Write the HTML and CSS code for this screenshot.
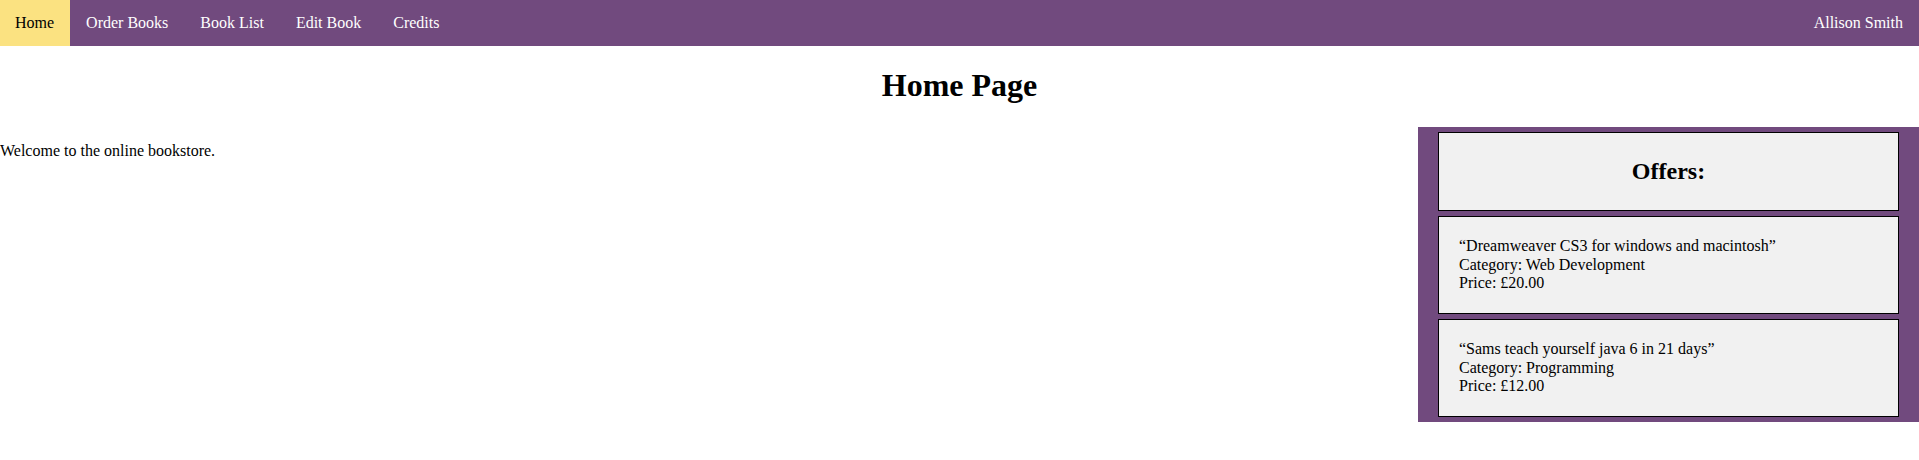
FILE: index.html
```html
<!DOCTYPE html>
<html lang="en">
<head>
<meta charset="utf-8">
<title>Home Page</title>
<link rel="stylesheet" href="styles.css">
</head>
<body>
<nav class="topnav">
  <div class="nav-links">
    <a class="nav-item active" href="#">Home</a>
    <a class="nav-item" href="#">Order Books</a>
    <a class="nav-item" href="#">Book List</a>
    <a class="nav-item" href="#">Edit Book</a>
    <a class="nav-item" href="#">Credits</a>
  </div>
  <span class="nav-item user">Allison Smith</span>
</nav>
<h1 class="page-title">Home Page</h1>
<div class="layout">
  <main class="main">
    <p>Welcome to the online bookstore.</p>
  </main>
  <aside class="offers">
    <div class="box box-head"><h2>Offers:</h2></div>
    <div class="box">
      “Dreamweaver CS3 for windows and macintosh”<br>
      Category: Web Development<br>
      Price: £20.00
    </div>
    <div class="box">
      “Sams teach yourself java 6 in 21 days”<br>
      Category: Programming<br>
      Price: £12.00
    </div>
  </aside>
</div>
</body>
</html>
```
FILE: styles.css
```css
html, body {
  margin: 0;
  padding: 0;
  background: #ffffff;
  color: #000000;
  font-family: "Liberation Serif", "Times New Roman", serif;
  font-size: 16px;
}

.topnav {
  display: flex;
  justify-content: space-between;
  background: #714a7e;
}

.nav-links {
  display: flex;
}

.nav-item {
  display: block;
  padding: 14px 16px;
  line-height: 18px;
  color: #ffffff;
  text-decoration: none;
}

.nav-item.active {
  padding: 14px 16px 14px 15px;
  background: #fbe281;
  color: #000000;
}

.page-title {
  text-align: center;
  font-size: 32px;
  font-weight: bold;
  margin: 21.44px 0;
}

.layout {
  display: flex;
  justify-content: space-between;
  align-items: flex-start;
}

.main p {
  margin: 16px 0;
}

.offers {
  width: 461px;
  margin-top: 1px;
  padding: 5px 20px;
  background: #714a7e;
  display: flex;
  flex-direction: column;
  gap: 5px;
}

.box {
  background: #f1f1f1;
  border: 1px solid #000000;
  padding: 20px;
  line-height: 18.67px;
}

.box-head h2 {
  margin: 5px 0;
  text-align: center;
  font-size: 24px;
  line-height: 27px;
}
```
